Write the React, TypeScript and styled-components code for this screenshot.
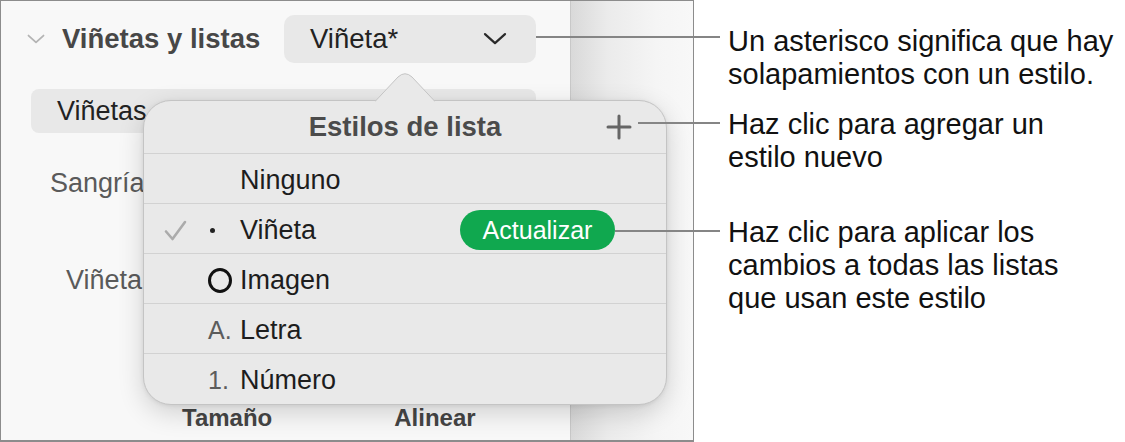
import React from 'react'
import styled, { createGlobalStyle } from 'styled-components'

const GlobalStyle = createGlobalStyle`
    html, body {
        margin: 0;
        padding: 0;
        background: #ffffff;
    }
    body {
        font-family: 'Liberation Sans', Arial, sans-serif;
        -webkit-font-smoothing: antialiased;
    }
`

const LINE_END = 720

type Marker = 'none' | 'bullet' | 'ring' | 'letter' | 'number'

const STYLES: { name: string; marker: Marker; checked?: boolean; update?: boolean }[] = [
    { name: 'Ninguno', marker: 'none' },
    { name: 'Viñeta', marker: 'bullet', checked: true, update: true },
    { name: 'Imagen', marker: 'ring' },
    { name: 'Letra', marker: 'letter' },
    { name: 'Número', marker: 'number' },
]

function Chevron({ size, color, stroke }: { size: number; color: string; stroke: number }) {
    return (
        <svg width={size} height={size * 0.55} viewBox="0 0 24 13" fill="none">
            <path d="M2 2 L12 11 L22 2" stroke={color} strokeWidth={stroke} strokeLinecap="round" strokeLinejoin="round" />
        </svg>
    )
}

function Check() {
    return (
        <svg width="23" height="21" viewBox="0 0 23 21" fill="none">
            <path d="M2 11.5 L8.5 19 L21 2" stroke="#ababab" strokeWidth="2.6" strokeLinecap="round" strokeLinejoin="round" />
        </svg>
    )
}

function Plus() {
    return (
        <svg width="26" height="26" viewBox="0 0 26 26">
            <path d="M13 2 V24 M2 13 H24" stroke="#666" strokeWidth="3" strokeLinecap="round" />
        </svg>
    )
}

function ListMarker({ kind }: { kind: Marker }) {
    if (kind === 'bullet') return <Bullet />
    if (kind === 'ring') return <Ring />
    if (kind === 'letter') return <MarkerText>A.</MarkerText>
    if (kind === 'number') return <MarkerText>1.</MarkerText>
    return null
}

function StylesPopover() {
    return (
        <Popover>
            <PopoverArrow width="60" height="29" viewBox="0 0 60 29">
                <path
                    d="M0 28.5 L23 4 Q30 -2.5 37 4 L60 28.5"
                    fill="#e9e9e9"
                    stroke="#c4c4c4"
                    strokeWidth="1"
                />
            </PopoverArrow>
            <PopoverHeader>
                <span />
                <PopoverTitle>Estilos de lista</PopoverTitle>
                <AddButton>
                    <Plus />
                </AddButton>
            </PopoverHeader>
            {STYLES.map((s) => (
                <StyleRow key={s.name}>
                    <CheckCell>{s.checked && <Check />}</CheckCell>
                    <MarkerCell>
                        <ListMarker kind={s.marker} />
                    </MarkerCell>
                    <StyleName>{s.name}</StyleName>
                    {s.update && <UpdateButton>Actualizar</UpdateButton>}
                </StyleRow>
            ))}
        </Popover>
    )
}

export default function App(): JSX.Element {
    return (
        <Page>
            <GlobalStyle />
            <Frame>
                <Sidebar>
                    <SectionHeader>
                        <Chevron size={18} color="#b4b4b4" stroke={2.4} />
                        <SectionTitle>Viñetas y listas</SectionTitle>
                        <StylePicker>
                            <span>Viñeta*</span>
                            <Chevron size={24} color="#2a2a2a" stroke={2.2} />
                        </StylePicker>
                    </SectionHeader>
                    <TypeButton>Viñetas</TypeButton>
                    <FieldLabel $indent={49} $top={30}>
                        Sangría
                    </FieldLabel>
                    <FieldLabel $indent={65} $top={57}>
                        Viñeta
                    </FieldLabel>
                    <BottomLabels>
                        <span>Tamaño</span>
                        <span>Alinear</span>
                    </BottomLabels>
                    <StylesPopover />
                </Sidebar>
                <Gutter />
            </Frame>
            <Callouts>
                <Callout $lineFrom={536} $lineTop={11} $gap={0}>
                    Un asterisco significa que hay
                    <br />
                    solapamientos con un estilo.
                </Callout>
                <Callout $lineFrom={638} $lineTop={14} $gap={17}>
                    Haz clic para agregar un
                    <br />
                    estilo nuevo
                </Callout>
                <Callout $lineFrom={615} $lineTop={14} $gap={42}>
                    Haz clic para aplicar los
                    <br />
                    cambios a todas las listas
                    <br />
                    que usan este estilo
                </Callout>
            </Callouts>
        </Page>
    )
}

const Page = styled.div`
    display: flex;
    width: 1125px;
    height: 442px;
    overflow: hidden;
`

const Frame = styled.div`
    display: flex;
    width: 694px;
    height: 442px;
    box-sizing: border-box;
    border: 1px solid #8c8c8c;
    border-bottom-width: 2px;
    flex-shrink: 0;
`

const Sidebar = styled.div`
    position: relative;
    z-index: 1;
    width: 570px;
    flex-shrink: 0;
    display: flex;
    flex-direction: column;
    box-sizing: border-box;
    padding-top: 14px;
    background: #f8f8f8;
    border-right: 1px solid #c8c8c8;
`

const Gutter = styled.div`
    flex: 1;
    background: linear-gradient(to right, #d9d9d9 0%, #ebebeb 30%, #f5f5f5 70%, #f8f8f8 100%);
`

const SectionHeader = styled.div`
    display: flex;
    align-items: center;
    height: 48px;
    padding-left: 26px;
    padding-right: 34px;
    svg {
        flex-shrink: 0;
    }
`

const SectionTitle = styled.span`
    margin-left: 17px;
    font-size: 27.5px;
    font-weight: 700;
    color: #474747;
    white-space: nowrap;
`

const StylePicker = styled.div`
    margin-left: auto;
    width: 252px;
    height: 48px;
    flex-shrink: 0;
    box-sizing: border-box;
    display: flex;
    align-items: center;
    justify-content: space-between;
    padding: 0 29px 0 26px;
    border-radius: 10px;
    background: #e8e8e8;
    font-size: 27.5px;
    color: #222;
`

const TypeButton = styled.div`
    margin: 26px 34px 0 30px;
    height: 44px;
    display: flex;
    align-items: center;
    padding-left: 26px;
    border-radius: 8px;
    background: #e8e8e8;
    font-size: 27px;
    color: #222;
`

const FieldLabel = styled.div<{ $indent: number; $top: number }>`
    margin-top: ${(p) => p.$top}px;
    padding-left: ${(p) => p.$indent}px;
    height: 40px;
    line-height: 40px;
    font-size: 27px;
    color: #5a5a5a;
`

const BottomLabels = styled.div`
    margin-top: auto;
    height: 44px;
    display: flex;
    align-items: center;
    padding-left: 181px;
    gap: 122px;
    font-size: 24px;
    font-weight: 700;
    color: #454545;
`

const Popover = styled.div`
    position: absolute;
    left: 142px;
    top: 99px;
    width: 524px;
    box-sizing: border-box;
    background: #e9e9e9;
    border: 1px solid #c4c4c4;
    border-radius: 28px;
    box-shadow: 0 8px 26px rgba(0, 0, 0, 0.16), 0 1px 4px rgba(0, 0, 0, 0.08);
`

const PopoverArrow = styled.svg`
    position: absolute;
    top: -28px;
    left: 231px;
`

const PopoverHeader = styled.div`
    position: relative;
    height: 52px;
    display: grid;
    grid-template-columns: 1fr auto 1fr;
    align-items: center;
    border-bottom: 1px solid #d2d2d2;
`

const PopoverTitle = styled.span`
    font-size: 27.5px;
    font-weight: 700;
    color: #4b4b4b;
`

const AddButton = styled.span`
    justify-self: end;
    display: flex;
    padding-right: 34px;
`

const StyleRow = styled.div`
    box-sizing: border-box;
    height: 50px;
    display: flex;
    align-items: center;
    padding: 3px 51px 0 20px;
    border-bottom: 1px solid #d2d2d2;
    &:last-child {
        border-bottom: none;
    }
`

const CheckCell = styled.span`
    width: 44px;
    display: flex;
    align-items: center;
`

const MarkerCell = styled.span`
    width: 32px;
    display: flex;
    align-items: center;
`

const Bullet = styled.span`
    width: 5px;
    height: 5px;
    margin-left: 2px;
    border-radius: 50%;
    background: #222;
`

const Ring = styled.span`
    width: 18px;
    height: 19px;
    border: 3.5px solid #111;
    border-radius: 50%;
`

const MarkerText = styled.span`
    font-size: 25px;
    color: #5c5c5c;
`

const StyleName = styled.span`
    font-size: 27px;
    color: #1d1d1d;
`

const UpdateButton = styled.span`
    margin-left: auto;
    width: 155px;
    height: 40px;
    display: flex;
    align-items: center;
    justify-content: center;
    border-radius: 20px;
    background: #10a84f;
    font-size: 25px;
    color: #ffffff;
`

const Callouts = styled.div`
    position: relative;
    z-index: 2;
    display: flex;
    flex-direction: column;
    padding: 24.5px 0 0 34px;
`

const Callout = styled.div<{ $lineFrom: number; $lineTop: number; $gap: number }>`
    position: relative;
    margin-top: ${(p) => p.$gap}px;
    font-size: 29px;
    line-height: 33px;
    color: #111;
    white-space: nowrap;
    &::before {
        content: '';
        position: absolute;
        right: calc(100% + 8px);
        top: ${(p) => p.$lineTop}px;
        width: ${(p) => LINE_END - p.$lineFrom}px;
        height: 2px;
        background: #858585;
    }
`
